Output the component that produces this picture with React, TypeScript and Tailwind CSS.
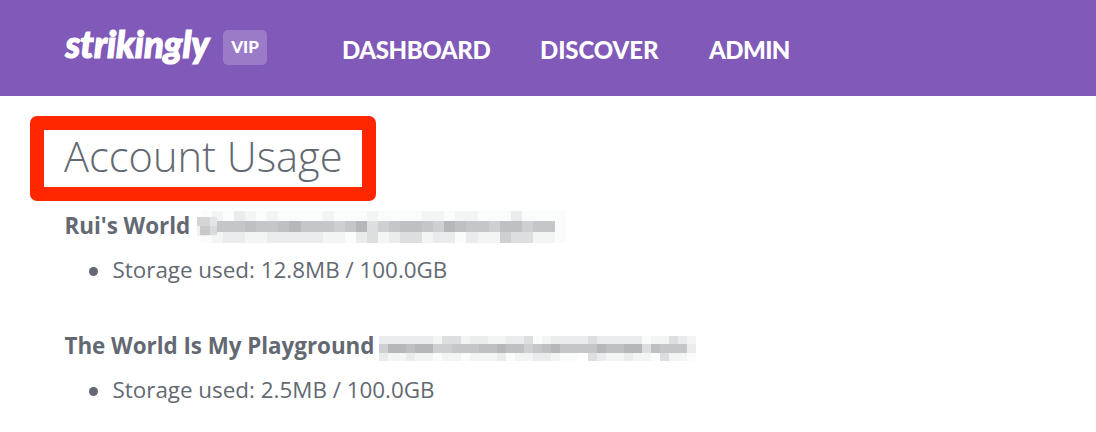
import React from 'react'

interface Site {
  name: string
  used: string
  mask: React.ReactNode
}

interface MosaicProps {
  cell: number
  heights: number[]
  rows: string[]
}

// Shades used by the redaction blocks, lightest to darkest
const SHADES: Record<string, string> = {
  '0': '#ffffff',
  '1': '#fafbfb',
  '2': '#f3f4f4',
  '3': '#eaebec',
  '4': '#dddee0',
  '5': '#cecfd3',
  '6': '#c5c6ca',
  '7': '#bec1c4',
  '8': '#b5b7bb',
}

function Mosaic({ cell, heights, rows }: MosaicProps) {
  const width = rows[0].length * cell
  const height = heights.reduce((a, b) => a + b, 0)
  let y = 0
  return (
    <svg width={width} height={height} className="block" shapeRendering="crispEdges" aria-hidden="true">
      {rows.map((row, r) => {
        const top = y
        y += heights[r]
        return row.split('').map((shade, i) => (
          <rect key={`${r}-${i}`} x={i * cell} y={top} width={cell} height={heights[r]} fill={SHADES[shade]} />
        ))
      })}
    </svg>
  )
}

const sites: Site[] = [
  {
    name: "Rui's World",
    used: '12.8MB / 100.0GB',
    mask: (
      <div className="relative ml-[11px] mt-[11px]">
        <Mosaic
          cell={11.06}
          heights={[10, 11, 11]}
          rows={[
            '121321211112111211112212211131111',
            '466676678666568456776587665775661',
            '123322333332213423442331322544221',
          ]}
        />
        <svg className="absolute -left-1 top-[6px]" width="21" height="19" aria-hidden="true">
          <rect width="20" height="19" fill="#f0f1f1" />
          <rect width="13" height="9" fill="#d4d5d7" />
          <rect x="3" y="9" width="10" height="9" fill="#c8c9cb" />
          <rect x="13" width="7" height="9" fill="#e4e5e6" />
          <rect x="13" y="9" width="7" height="9" fill="#d9dadb" />
        </svg>
      </div>
    ),
  },
  {
    name: 'The World Is My Playground',
    used: '2.5MB / 100.0GB',
    mask: (
      <div className="ml-[5px] mt-4">
        <Mosaic
          cell={9.07}
          heights={[8, 9, 8]}
          rows={[
            '33333324423322334123333433333122432',
            '58878855666778775678666687788476663',
            '32232212212223122332110432232214221',
          ]}
        />
      </div>
    ),
  },
]

function Logo() {
  return (
    <svg width="148" height="72" viewBox="0 0 148 72" className="overflow-visible" aria-label="strikingly">
      <text
        x="1.5"
        y="46"
        textLength="144"
        lengthAdjust="spacingAndGlyphs"
        fill="white"
        stroke="white"
        strokeWidth="1.2"
        className="font-['Lato'] text-[37px] font-black italic"
      >
        strikingly
      </text>
    </svg>
  )
}

function NavItem({ label, className }: { label: string; className: string }) {
  return (
    <a className={`font-['Lato',sans-serif] text-2xl font-black text-white whitespace-nowrap ${className}`}>{label}</a>
  )
}

function SiteUsage({ site }: { site: Site }) {
  return (
    <section className="h-[120px]">
      <div className="flex h-[54px] items-start">
        <h2 className="pt-[10px] text-[22.4px] leading-8 font-bold tracking-[-0.03px] whitespace-nowrap">{site.name}</h2>
        {site.mask}
      </div>
      <ul className="flex items-center pl-[24px] text-[22.4px] leading-8">
        <li className="flex items-center whitespace-nowrap">
          <span className="mt-[2px] mr-[15px] h-[9px] w-[9px] rounded-full bg-[#636972]" />
          Storage used: {site.used}
        </li>
      </ul>
    </section>
  )
}

export default function App() {
  return (
    <div className="h-[432px] w-[1096px] overflow-hidden bg-white font-['Open_Sans',sans-serif] text-[#636972]">
      <header className="flex h-24 items-center bg-[#8159b8] pl-16">
        <Logo />
        <span className="mb-[2px] ml-[11px] flex h-[35px] w-11 items-center justify-center rounded-[5px] bg-[#9b7bc8] font-['Lato',sans-serif] text-[17px] font-black text-white">
          VIP
        </span>
        <nav className="flex pt-[3px] pl-[75px]">
          <NavItem label="DASHBOARD" className="w-[198px] tracking-[-0.4px]" />
          <NavItem label="DISCOVER" className="w-[169px] tracking-[-0.1px]" />
          <NavItem label="ADMIN" className="tracking-[-0.6px]" />
        </nav>
      </header>
      <main>
        <div className="pt-5 pl-[30px]">
          <h1 className="flex h-[85px] w-[346px] items-center rounded-[7px] bg-[#ff2600] p-[14px]">
            <span className="flex h-[57px] w-[318px] items-center bg-white pb-[5px] pl-5 text-[41.6px] font-light whitespace-nowrap">
              Account Usage
            </span>
          </h1>
        </div>
        <div className="-mt-px pl-[64.5px]">
          {sites.map((site) => (
            <SiteUsage key={site.name} site={site} />
          ))}
        </div>
      </main>
    </div>
  )
}
